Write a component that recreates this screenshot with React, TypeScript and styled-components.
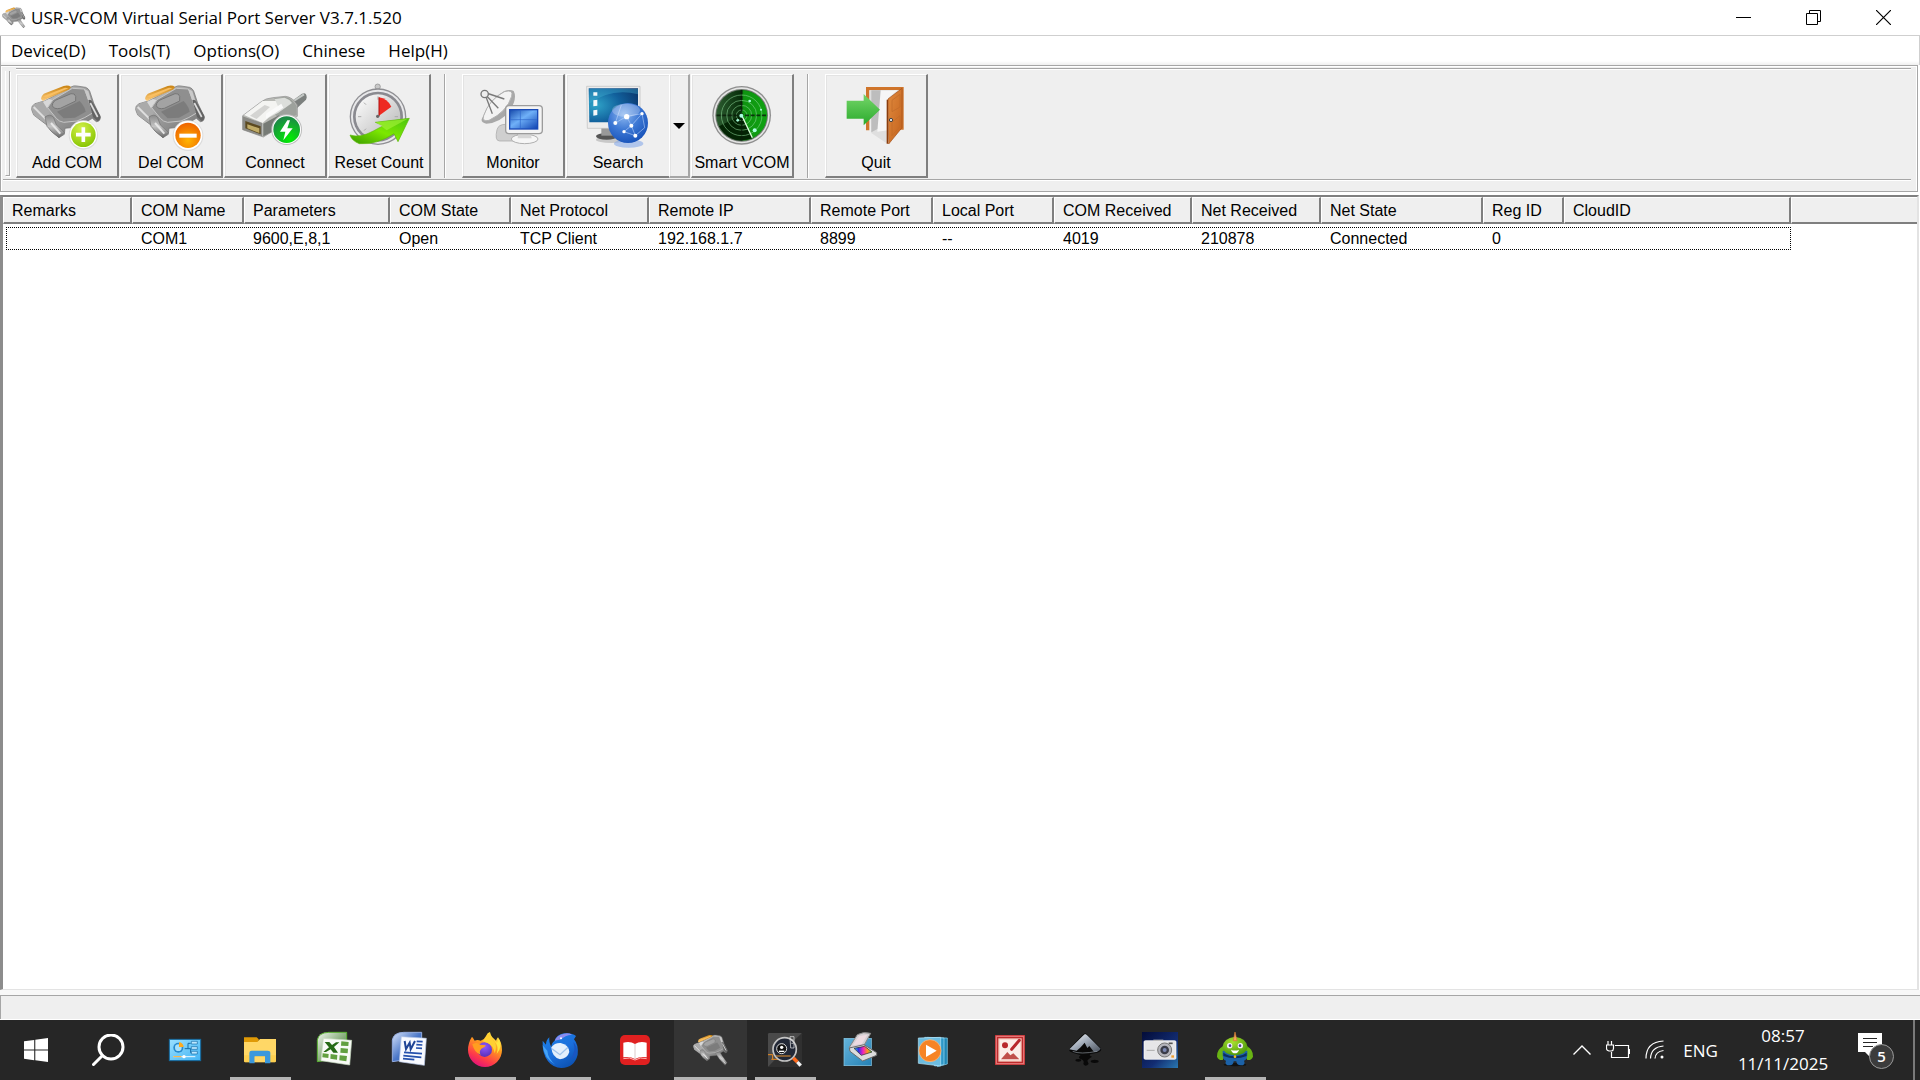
import React from "react";
import styled, { createGlobalStyle, css } from "styled-components";

const face = "#efefef";
const shade = "#a6a6a6";
const dark = "#7f7f7f";
const shellFont = '"Open Sans", "Noto Sans", sans-serif';
const classicFont = '"Liberation Sans", Arial, sans-serif';

const GlobalStyle = createGlobalStyle`
  *, *::before, *::after { box-sizing: border-box; }
  body { margin: 0; background: #fff; color: #000; }
  button { font: inherit; color: inherit; background: none; border: 0; padding: 0; margin: 0; }
  svg { display: block; flex: none; }
`;

const Screen = styled.div`
  display: flex;
  flex-direction: column;
  min-height: 100vh;
  font-family: ${classicFont};
  font-size: 16px;
`;

const Window = styled.main`
  flex: 1;
  display: flex;
  flex-direction: column;
`;

const TitleBar = styled.header`
  display: flex;
  align-items: center;
  height: 36px;
  padding: 0 2px;
  border-bottom: 1px solid #cfcfcf;
  font-family: ${shellFont};
`;

const Title = styled.h1`
  flex: 1;
  margin: 0 0 0 5px;
  font-size: 17px;
  line-height: 24px;
  font-weight: 400;
`;

const CaptionButton = styled.button`
  display: grid;
  place-items: center;
  width: 70px;
  height: 34px;
`;

const MenuBar = styled.nav`
  display: flex;
  gap: 3px;
  height: 29px;
  border-left: 1px solid ${shade};
  border-right: 1px solid #cfcfcf;
  background: linear-gradient(#fff 25px, ${face} 29px);
  font-family: ${shellFont};
  font-size: 17px;
`;

const MenuItem = styled.button`
  padding: 0 10px;
  line-height: 27px;
`;

const Rebar = styled.section`
  height: 127px;
  margin-right: 2px;
  border: 1px solid ${shade};
  background: ${face};
  box-shadow: inset 1px 1px #fff, inset -1px 0 #fff;
  padding: 2px 6px 0 2px;
`;

const Band = styled.div`
  display: flex;
  align-items: flex-start;
  height: 112px;
  border-bottom: 1px solid ${shade};
  box-shadow: 0 1px #fff;
`;

const Grip = styled.div`
  width: 5px;
  height: 105px;
  margin: 3px 6px 0 2px;
  border: solid ${shade};
  border-width: 0 1px 1px 0;
  border-left: 1px solid #fff;
  box-shadow: 1px 1px #fff;
`;

const Tools = styled.div`
  flex: 1;
  display: flex;
  gap: 1px;
  padding-top: 5px;
  border-top: 1px solid ${shade};
  box-shadow: inset 0 1px #fff;
`;

const raised = css`
  border: solid;
  border-width: 1px 2px 2px 1px;
  border-color: #fff ${dark} ${dark} #fff;
  box-shadow: inset 1px 1px #e3e3e3;
`;

const ToolButton = styled.button<{ $flat?: boolean }>`
  ${raised}
  display: flex;
  flex-direction: column;
  align-items: center;
  width: 103px;
  height: 104px;
  padding-top: 6px;
  line-height: 20px;
  white-space: nowrap;
  ${(p) => p.$flat && "border-right-width: 0;"}
`;

const DropButton = styled.button`
  ${raised}
  display: grid;
  place-items: center;
  width: 21px;
  height: 104px;
  margin-left: -1px;
  border-color: #fff ${shade} ${shade} #fff;
`;

const Separator = styled.div`
  width: 2px;
  height: 104px;
  margin: 0 15px 0 12px;
  border-left: 1px solid ${shade};
  border-right: 1px solid #fff;
`;

const ListFrame = styled.section`
  flex: 1;
  margin: 3px 1px 0 0;
  border: solid;
  border-width: 2px 2px 1px 3px;
  border-color: ${dark} #e3e3e3 #e3e3e3 #8c8c8c;
  background: #fff;
`;

const Table = styled.table`
  width: 100%;
  table-layout: fixed;
  border-collapse: separate;
  border-spacing: 0;
`;

const HeadCell = styled.th`
  height: 27px;
  padding: 1px 0 0 8px;
  border: solid;
  border-width: 1px 2px 2px 1px;
  border-color: #fff ${dark} ${dark} #fff;
  background: ${face};
  font-weight: 400;
  line-height: 22px;
  text-align: left;
  white-space: nowrap;
  &:last-child { border-right-width: 0; }
`;

const Row = styled.tr`
  position: relative;
`;

const FocusRing = styled.span<{ $width: number }>`
  position: absolute;
  left: 3px;
  top: 3px;
  width: ${(p) => p.$width}px;
  height: 23px;
  border: 1px dotted #000;
  pointer-events: none;
`;

const Cell = styled.td`
  height: 29px;
  padding: 0 0 0 9px;
  line-height: 24px;
  white-space: nowrap;
`;

const StatusBar = styled.footer`
  height: 30px;
  border-top: 5px solid #f8f8f8;
  border-bottom: 1px solid #fff;
  background: ${face};
  box-shadow: inset 0 1px ${shade}, inset 1px 0 ${shade};
`;

const Taskbar = styled.nav`
  display: flex;
  height: 60px;
  background: #262626;
  color: #fff;
  font-family: ${shellFont};
  font-size: 17px;
`;

const ShellButton = styled.button`
  display: grid;
  place-items: center;
  width: 72px;
  height: 60px;
`;

const Apps = styled.div`
  flex: 1;
  display: flex;
  padding-left: 4px;
`;

const AppButton = styled.button<{ $running?: boolean; $active?: boolean }>`
  display: flex;
  justify-content: center;
  width: ${(p) => (p.$active ? 73 : 61)}px;
  height: 60px;
  margin: 0 ${(p) => (p.$active ? 1 : 7)}px;
  padding-top: 10px;
  border-bottom: 3px solid ${(p) => (p.$running || p.$active ? "#b4b4b4" : "transparent")};
  background: ${(p) => (p.$active ? "#343434" : "transparent")};
`;

const Tray = styled.div`
  display: flex;
  align-items: center;
  border-right: 2px solid #7a7a7a;
  margin-right: 5px;
`;

const TrayButton = styled.button<{ $width: number }>`
  display: grid;
  place-items: center;
  width: ${(p) => p.$width}px;
  height: 60px;
`;

const Clock = styled.button`
  width: 112px;
  line-height: 28px;
  text-align: center;
`;

const ClockLine = styled.time`
  display: block;
`;

/* ---------- drawings ---------- */

const Defs = () => (
  <svg width="0" height="0" style={{ position: "absolute" }} aria-hidden="true">
    <defs>
      <linearGradient id="metal" x1="0" y1="0" x2="1" y2="1">
        <stop offset="0" stopColor="#d2d2d2" /><stop offset=".5" stopColor="#9a9a9a" /><stop offset="1" stopColor="#6c6c6c" />
      </linearGradient>
      <linearGradient id="metal2" x1="0" y1="0" x2="0" y2="1">
        <stop offset="0" stopColor="#8a8a8a" /><stop offset=".5" stopColor="#c4c4c4" /><stop offset="1" stopColor="#6a6a6a" />
      </linearGradient>
      <linearGradient id="gold" x1="0" y1="0" x2="0" y2="1">
        <stop offset="0" stopColor="#c98312" /><stop offset="1" stopColor="#fbc978" />
      </linearGradient>
      <radialGradient id="lime" cx=".4" cy=".25" r=".8"><stop offset="0" stopColor="#d2f04a" /><stop offset="1" stopColor="#86c400" /></radialGradient>
      <radialGradient id="orange" cx=".5" cy=".7" r=".7"><stop offset="0" stopColor="#ffb400" /><stop offset="1" stopColor="#ee6200" /></radialGradient>
      <radialGradient id="bolt" cx=".6" cy=".85" r=".8"><stop offset="0" stopColor="#00f000" /><stop offset="1" stopColor="#1c8a45" /></radialGradient>
      <linearGradient id="white" x1="0" y1="0" x2="1" y2="1"><stop offset="0" stopColor="#fff" /><stop offset="1" stopColor="#b4b4b4" /></linearGradient>
      <linearGradient id="arrow" x1="0" y1="1" x2="1" y2="0"><stop offset="0" stopColor="#3a9a00" /><stop offset=".5" stopColor="#7ce800" /><stop offset="1" stopColor="#4cc412" /></linearGradient>
      <linearGradient id="screen" x1="0" y1="0" x2="1" y2="1"><stop offset="0" stopColor="#1b4fae" /><stop offset=".45" stopColor="#6fb0f8" /><stop offset="1" stopColor="#1246b4" /></linearGradient>
      <radialGradient id="desk" cx=".15" cy=".5" r="1"><stop offset="0" stopColor="#2fa3c8" /><stop offset=".5" stopColor="#11609c" /><stop offset="1" stopColor="#0b3166" /></radialGradient>
      <radialGradient id="globe" cx=".4" cy=".3" r=".75"><stop offset="0" stopColor="#8db8f0" /><stop offset=".5" stopColor="#3d78d4" /><stop offset="1" stopColor="#1550b8" /></radialGradient>
      <linearGradient id="radar" x1="0" y1="0" x2="1" y2="0"><stop offset="0" stopColor="#2c5c30" /><stop offset=".5" stopColor="#062c08" /><stop offset=".55" stopColor="#067a0a" /><stop offset="1" stopColor="#0aa80e" /></linearGradient>
      <linearGradient id="door" x1="0" y1="0" x2="1" y2="1"><stop offset="0" stopColor="#e08a3e" /><stop offset="1" stopColor="#c4621c" /></linearGradient>
      <linearGradient id="exit" x1="0" y1="0" x2="0" y2="1"><stop offset="0" stopColor="#76d66a" /><stop offset="1" stopColor="#2aaa2c" /></linearGradient>
      <linearGradient id="sky" x1="0" y1="0" x2="1" y2="1"><stop offset="0" stopColor="#9be0ff" /><stop offset="1" stopColor="#42b4f4" /></linearGradient>
      <linearGradient id="fire" x1=".8" y1="0" x2=".3" y2="1"><stop offset="0" stopColor="#fff14a" /><stop offset=".4" stopColor="#ff9a1e" /><stop offset=".75" stopColor="#ff3c48" /><stop offset="1" stopColor="#e0107c" /></linearGradient>
      <radialGradient id="violet" cx=".5" cy=".3" r=".7"><stop offset="0" stopColor="#9059ff" /><stop offset="1" stopColor="#5a30b8" /></radialGradient>
      <linearGradient id="bird" x1=".2" y1="0" x2=".8" y2="1"><stop offset="0" stopColor="#1d7fe4" /><stop offset=".5" stopColor="#1a6fdc" /><stop offset="1" stopColor="#0b4fae" /></linearGradient>
      <linearGradient id="rainbow" x1="0" y1="0" x2="1" y2="0"><stop offset="0" stopColor="#30d0f0" /><stop offset=".25" stopColor="#3030e0" /><stop offset=".5" stopColor="#f020c0" /><stop offset=".75" stopColor="#ff9020" /><stop offset="1" stopColor="#50e040" /></linearGradient>
      <linearGradient id="scan" x1="0" y1="0" x2="1" y2="1"><stop offset="0" stopColor="#64b4dc" /><stop offset="1" stopColor="#2580b4" /></linearGradient>
      <linearGradient id="peak" x1="0" y1="0" x2="1" y2="1"><stop offset="0" stopColor="#fff" /><stop offset=".45" stopColor="#a4aebc" /><stop offset="1" stopColor="#4a525e" /></linearGradient>
      <radialGradient id="monster" cx=".4" cy=".3" r=".7"><stop offset="0" stopColor="#a8e030" /><stop offset="1" stopColor="#4e9a0c" /></radialGradient>
      <linearGradient id="navy" x1="0" y1="0" x2="1" y2="1"><stop offset="0" stopColor="#030c38" /><stop offset=".6" stopColor="#122c72" /><stop offset="1" stopColor="#2a78b0" /></linearGradient>
      <linearGradient id="wordblue" x1="0" y1="0" x2="1" y2="1"><stop offset="0" stopColor="#d8e4fa" /><stop offset=".5" stopColor="#4c78c8" /><stop offset="1" stopColor="#1c48a0" /></linearGradient>
      <linearGradient id="xlgreen" x1="0" y1="0" x2="1" y2="1"><stop offset="0" stopColor="#f0f6ee" /><stop offset=".5" stopColor="#8cb080" /><stop offset="1" stopColor="#2c6c20" /></linearGradient>
    </defs>
  </svg>
);

const Art = ({ box, size, children }: { box: string; size: number; children: React.ReactNode }) => (
  <svg width={size} height={size} viewBox={box} aria-hidden="true">{children}</svg>
);

/* Serial plug on a 216-unit square */
const Plug = () => (
  <g>
    <path d="M2 86 Q0 74 12 68 L40 60 L120 18 Q128 13 138 15 L164 19 Q172 22 176 30 L188 66 L208 108 Q208 122 196 122 L184 112 L140 138 L102 142 L100 160 L84 170 L60 150 L50 134 L8 102 Z" fill="url(#metal)" stroke="#707070" strokeWidth="2" />
    <path d="M30 54 Q32 40 44 36 L98 15 Q112 11 120 18 L114 26 L52 52 L36 60 Z" fill="url(#gold)" />
    <path d="M36 46 L102 20 L112 22 L46 50Z" fill="#f9bf62" />
    <path d="M4 86 Q2 74 14 69 L34 60 L50 84 L58 104 L54 134 L8 102 Z" fill="#aaaaaa" />
    <path d="M8 78 L52 122" stroke="#dedede" strokeWidth="6" />
    <path d="M36 62 L54 54 L66 58 L48 82Z" fill="#d8d8d8" />
    <path d="M50 80 L66 56 L124 22 L160 24 L188 94 Q160 112 138 120 L98 124 Q84 122 76 112 Z" fill="#8f8f8f" stroke="#c6c6c6" strokeWidth="3" />
    <path d="M160 24 L172 30 L190 88 L184 98 Z" fill="#c9c9c9" />
    <path d="M64 74 Q64 60 82 54 L120 38 Q132 36 134 46 L134 60 L88 82 Q68 86 64 74Z" fill="#a3a3a3" stroke="#777" strokeWidth="3" />
    <path d="M78 92 L146 60 Q162 78 164 92 L132 110 L98 112 Z" fill="#7c7c7c" />
    <path d="M42 108 Q58 96 68 110 L76 132 L100 154 L84 170 L62 152 L48 136Z" fill="url(#metal2)" stroke="#6f6f6f" strokeWidth="2" />
    <path d="M60 126 L88 158" stroke="#e6e6e6" strokeWidth="6" />
    <path d="M172 58 Q180 52 186 66 L208 104 Q210 116 200 120 L186 108 Z" fill="#636363" />
    <path d="M178 66 L200 108" stroke="#dcdcdc" strokeWidth="5" />
  </g>
);

const PlugWithCable = () => (
  <g>
    <Plug />
    <path d="M136 124 L162 116 L176 140 L206 182 L194 198 L160 160 Z" fill="url(#metal2)" stroke="#666" strokeWidth="2" />
    <path d="M160 140 L196 188" stroke="#d0d0d0" strokeWidth="6" />
  </g>
);

const AddIcon = () => (
  <Art box="0 0 216 216" size={72}>
    <Plug />
    <circle cx="157" cy="162" r="44" fill="#dcdcdc" /><circle cx="157" cy="161" r="41" fill="#fff" />
    <circle cx="157" cy="161" r="37" fill="url(#lime)" />
    <path d="M157 139v44M135 161h44" stroke="#fff" strokeWidth="11" />
  </Art>
);
const DelIcon = () => (
  <Art box="0 0 216 216" size={72}>
    <Plug />
    <circle cx="159" cy="164" r="46" fill="#dcdcdc" /><circle cx="159" cy="163" r="43" fill="#fff" />
    <circle cx="159" cy="163" r="38" fill="url(#orange)" />
    <path d="M133 164h52" stroke="#fff" strokeWidth="12" />
  </Art>
);
const ConnectIcon = () => (
  <Art box="719 240 216 216" size={72}>
    <path d="M858 314 L908 278 Q922 272 922 290 L920 296 L880 334Z" fill="#7c807e" />
    <path d="M864 312 L914 280" stroke="#c4c8c6" strokeWidth="6" />
    <path d="M730 344 L786 302 Q798 292 820 290 L858 286 Q880 288 894 312 L894 346 L792 408 L730 386Z" fill="#b9bab6" stroke="#8c8c8c" strokeWidth="2" />
    <path d="M734 342 L790 300 L840 300 L846 316 L790 366Z" fill="#f4f4f2" />
    <path d="M752 344 L796 312 L812 318 L772 354Z" fill="#d4d4d2" />
    <path d="M824 292 L858 288 Q880 292 892 316 L892 342 L846 358 L826 340 L846 310Z" fill="#9da19c" />
    <path d="M826 294 L856 290 Q870 294 878 306 L836 336 L800 354 L836 316Z" fill="#dcdedb" />
    <path d="M800 338 L846 308 L852 320 L800 354Z" fill="#fafafa" />
    <path d="M730 346 L788 366 L788 406 L730 386Z" fill="#8b8b87" />
    <path d="M738 360 L784 376 V400 L738 382Z" fill="#5c4a20" />
    <path d="M744 370 L780 382 V396 L744 382Z" fill="#c0ab66" />
    <path d="M792 368 L840 342 L830 386 L792 406Z" fill="#777b76" />
    <circle cx="862" cy="386" r="46" fill="#bdbdbd" /><circle cx="862" cy="386" r="43" fill="#fff" />
    <circle cx="862" cy="386" r="40" fill="url(#bolt)" />
    <path d="M864 358 L842 392 H858 L852 418 L880 382 H864 L872 358Z" fill="#fff" />
  </Art>
);
const ResetIcon = () => (
  <Art box="1029 240 216 216" size={72}>
    <circle cx="1133" cy="257" r="8" fill="#c8c8c8" stroke="#888" strokeWidth="2" />
    <circle cx="1134" cy="347" r="85" fill="#8e8e92" />
    <circle cx="1134" cy="347" r="81" fill="#e8e8ea" />
    <circle cx="1134" cy="347" r="75" fill="#8a8a90" />
    <circle cx="1134" cy="347" r="67" fill="url(#white)" />
    <path d="M1134 286v10M1074 347h10M1184 347h10M1092 305l6 6M1092 389l6-6" stroke="#aaa" strokeWidth="3" />
    <path d="M1137 289 Q1162 293 1174 317 L1137 344Z" fill="#ee2a22" />
    <path d="M1137 289v56" stroke="#b01010" strokeWidth="3" />
    <circle cx="1133" cy="346" r="5" fill="#666" />
    <path d="M1050 402 Q1080 412 1120 390 L1150 374 L1126 364 L1228 352 L1194 422 L1182 398 Q1130 432 1078 428 Q1056 420 1050 402Z" fill="url(#arrow)" stroke="#5cb808" strokeWidth="2" />
    <path d="M1128 364 L1222 354 L1160 388Z" fill="#a6f43c" opacity=".6" />
  </Art>
);
const MonitorIcon = () => (
  <Art box="140 60 216 216" size={72}>
    <path d="M200 206 Q204 190 226 190 L262 210 V240 H208 Q192 240 200 206Z" fill="#cfcfcf" stroke="#a4a4a4" strokeWidth="2" />
    <path d="M156 170 Q148 184 168 188 Q210 186 238 150 Q262 112 250 90 Q240 84 222 90 Q180 112 156 170Z" fill="#a8a8a8" />
    <path d="M160 164 Q176 116 222 92 Q250 84 244 106 Q230 152 176 178 Q154 184 160 164Z" fill="#f3f3f3" stroke="#b2b2b2" strokeWidth="3" />
    <path d="M164 100 L204 142 M164 100 L186 158 M168 96 L222 114" stroke="#7a7a7a" strokeWidth="4" />
    <circle cx="163" cy="99" r="11" fill="#eee" stroke="#777" strokeWidth="4" />
    <ellipse cx="283" cy="234" rx="40" ry="14" fill="#f6f6f6" stroke="#b0b0b0" strokeWidth="3" />
    <path d="M264 216h36l4 16h-42z" fill="#d6d6d6" />
    <rect x="226" y="134" width="110" height="84" rx="10" fill="#f4f4f4" stroke="#9c9c9c" strokeWidth="4" />
    <rect x="236" y="144" width="88" height="62" fill="#1a4bb8" />
    <rect x="240" y="148" width="80" height="54" fill="url(#screen)" />
    <path d="M240 176h80M270 148v54" stroke="#2d66cc" strokeWidth="2" />
  </Art>
);
const SearchToolIcon = () => (
  <Art box="452 60 216 216" size={72}>
    <ellipse cx="540" cy="236" rx="46" ry="10" fill="#c8c8c8" />
    <ellipse cx="526" cy="226" rx="32" ry="10" fill="#555" /><path d="M510 200h34v24h-34z" fill="#999" />
    <path d="M466 76 H626 V202 H468Z" fill="#ececec" stroke="#bdbdbd" strokeWidth="2" />
    <path d="M472 82 H620 V184 H474Z" fill="url(#desk)" />
    <path d="M474 128 Q540 80 620 100 V84 H474Z" fill="#49b8d8" opacity=".35" />
    <path d="M486 94h12v10h-12zM486 118l12-2v18l-12 2zM486 148l12-2v16l-12 2z" fill="#f4f8fa" />
    <ellipse cx="592" cy="248" rx="44" ry="12" fill="#86a8e8" opacity=".6" />
    <circle cx="590" cy="186" r="60" fill="url(#globe)" />
    <path d="M552 186 L586 166 L632 158 M586 166 L600 194 L632 158 M600 194 L578 212 L612 224 L600 194 M552 186 L570 132 M632 158 L640 200 L612 224" stroke="#c4dcff" strokeWidth="2" opacity=".8" fill="none" />
    <g fill="#fff"><circle cx="552" cy="186" r="6" /><circle cx="586" cy="167" r="8" /><circle cx="600" cy="194" r="6" /><circle cx="632" cy="158" r="5" /><circle cx="578" cy="212" r="5" /><circle cx="612" cy="224" r="6" /></g>
    <ellipse cx="584" cy="148" rx="42" ry="20" fill="#fff" opacity=".25" />
  </Art>
);
const RadarIcon = () => (
  <Art box="827 60 216 216" size={72}>
    <circle cx="934" cy="163" r="88" fill="#8e8e8e" /><circle cx="934" cy="163" r="84" fill="#e4e4e4" />
    <circle cx="934" cy="163" r="79" fill="#707870" /><circle cx="934" cy="163" r="76" fill="url(#radar)" />
    <path d="M934 163 L966 232 Q900 254 866 196Z" fill="#032404" />
    <path d="M934 163 L936 88 Q1006 96 1009 163 Q1006 210 967 231Z" fill="#12a014" opacity=".7" />
    <g fill="none" stroke="#8fd89a" strokeWidth="2.5" opacity=".65"><circle cx="934" cy="163" r="16" /><circle cx="934" cy="163" r="30" /><circle cx="934" cy="163" r="45" /><circle cx="934" cy="163" r="61" /></g>
    <path d="M934 88v150M859 163h150" stroke="#0a1c0a" strokeWidth="5" strokeDasharray="12 5" opacity=".8" />
    <path d="M934 163 L966 230" stroke="#e0ffe0" strokeWidth="4" />
    <g fill="#a8ffe0"><circle cx="933" cy="164" r="6" /><circle cx="973" cy="208" r="6" /><circle cx="958" cy="120" r="4" /><circle cx="992" cy="146" r="3" /><circle cx="922" cy="178" r="4" /></g>
  </Art>
);
const QuitIcon = () => (
  <Art box="1228 60 216 216" size={72}>
    <path d="M1306 78 H1419 V206 H1406 V88 H1316 V208 H1306Z" fill="#cf742a" />
    <path d="M1316 88 H1406 V112 L1370 248 L1322 216Z" fill="#dfdfdf" />
    <path d="M1338 88 H1392 Q1346 130 1356 196 L1322 214 V88Z" fill="#bdbdbd" />
    <path d="M1350 88 H1400 L1372 112 V208 L1340 212Z" fill="#f6f6f6" />
    <path d="M1372 114 L1414 82 V200 L1374 249Z" fill="url(#door)" stroke="#a4501a" strokeWidth="2" />
    <path d="M1384 118 L1408 100 V138 L1384 152ZM1384 184 L1408 164 V196 L1384 224Z" fill="none" stroke="#c06a28" strokeWidth="2" />
    <path d="M1370 116v132" stroke="#8a3d0c" strokeWidth="4" />
    <circle cx="1381" cy="177" r="5" fill="#ddd" stroke="#444" strokeWidth="3" />
    <path d="M1248 119 H1299 V99 L1348 146 L1299 193 V173 H1248Z" fill="url(#exit)" />
  </Art>
);

const VcomTaskIcon = () => <Art box="-12 -16 236 236" size={39}><PlugWithCable /></Art>;
const PanelIcon = () => (
  <Art box="498 180 117 117" size={39}>
    <rect x="508" y="208" width="94" height="64" fill="url(#sky)" stroke="#14689c" strokeWidth="3" />
    <circle cx="535" cy="233" r="15" fill="#2789cc" /><circle cx="535" cy="233" r="10" fill="#a4e0fc" /><path d="M537 231V217A14 14 0 0 1 551 231Z" fill="#ffaa1c" />
    <path d="M554 236h10v-16h8M564 236h8v12h8" fill="none" stroke="#156ca8" strokeWidth="3" />
    <path d="M574 214h18v8h-18zM574 230h18v8h-18zM574 244h18v8h-18z" fill="#bce8ff" stroke="#156ca8" strokeWidth="2" />
    <path d="M520 260h66" stroke="#e8f8ff" strokeWidth="3" /><circle cx="552" cy="260" r="5" fill="#fff" />
    <path d="M520 260h24" stroke="#ffae32" strokeWidth="3" />
  </Art>
);
const FolderIcon = () => (
  <Art box="723 180 117 117" size={39}>
    <path d="M732 202h38l6 6v12h-44z" fill="#e09a06" />
    <path d="M732 216h40l8-9h48v66q0 4-4 4h-88q-4 0-4-4z" fill="#ffd766" />
    <path d="M732 256h96v17q0 4-4 4h-88q-4 0-4-4z" fill="#fcc83a" opacity=".5" />
    <path d="M748 280v-31q0-7 7-7h48q8 0 8 7v31h-16v-21h-31v21z" fill="#3b98dc" />
    <rect x="764" y="260" width="31" height="16" fill="#ffd766" />
  </Art>
);
const ExcelIcon = () => (
  <Art box="948 180 117 117" size={39}>
    <path d="M952 275 V210 Q956 188 986 187 H1040 V262Z" fill="url(#xlgreen)" stroke="#58b030" strokeWidth="3" />
    <path d="M970 205 L1055 211 L1049 285 L963 272Z" fill="#f8fbf6" stroke="#c4d8bc" strokeWidth="2" />
    <path d="M1024 214l22 2-1 12-22-1zM1022 234l22 2-1 14-22-2zM1019 256l22 2-2 16-21-3zM968 250l18 2-1 12-18-2zM992 252l20 3-1 14-20-3z" fill="#62a040" />
    <path d="M974 216h14l8 9 12-8h10l-16 14 12 17h-14l-8-10-14 8h-8l17-14z" fill="#256a14" />
  </Art>
);
const WordIcon = () => (
  <Art box="1173 180 117 117" size={39}>
    <path d="M1177 275 V210 Q1181 188 1211 187 H1265 V262Z" fill="url(#wordblue)" stroke="#94acdf" strokeWidth="3" />
    <path d="M1204 200 L1279 205 L1273 286 L1198 275Z" fill="#f8faff" stroke="#b8c8e8" strokeWidth="2" />
    <path d="M1214 213 L1218 237 L1229 218 L1232 238 L1245 213" fill="none" stroke="#1f4496" strokeWidth="6" />
    <path d="M1250 214l18 1M1249 224l18 1M1248 234l18 1M1212 247l54 4M1210 257l54 5M1209 266l34 3" stroke="#2450ac" strokeWidth="5" />
  </Art>
);
const FirefoxIcon = () => (
  <Art box="78 60 117 117" size={39}>
    <path d="M96 80 Q100 84 104 92 Q112 88 122 92 Q134 88 138 78 Q142 68 150 66 Q152 80 162 86 L168 92 Q170 86 174 82 Q186 98 186 120 A51 51 0 0 1 84 120 Q84 98 96 80Z" fill="url(#fire)" />
    <circle cx="134" cy="119" r="22" fill="url(#violet)" />
    <path d="M97 103 Q112 94 120 104 L137 106 Q136 112 124 116 Q116 124 122 134 Q104 130 97 103Z" fill="#ff9e20" />
    <path d="M150 68 Q152 82 164 94 Q178 110 170 132 Q190 108 176 86 L171 98 Q156 86 150 68Z" fill="#ffe63e" />
    <path d="M128 94 Q140 76 150 68 Q150 84 164 96 Q172 112 164 130 Q160 106 144 100Z" fill="#ffd032" />
  </Art>
);
const BirdIcon = () => (
  <Art box="303 60 117 117" size={39}>
    <path d="M308 92 Q306 130 324 154 Q340 174 364 174 Q404 172 413 134 Q416 104 402 88 L408 78 Q396 68 372 70 Q350 74 344 92 Q334 98 334 112 Q326 94 328 82 Q318 90 318 104Z" fill="url(#bird)" />
    <path d="M344 92 Q350 76 372 71 Q386 68 396 74 Q374 76 364 88Z" fill="#8a8cf0" />
    <path d="M308 106 Q312 146 346 164 Q324 146 322 122Z" fill="#45a4f6" />
    <path d="M400 96 Q410 126 390 148 Q404 144 410 130 Q412 108 400 96Z" fill="#1a56c0" />
    <path d="M334 112 Q344 98 362 99 Q386 104 388 126 Q382 146 360 148 Q336 142 334 112Z" fill="#e4f0fc" />
    <path d="M336 116 L360 134 L384 112" fill="none" stroke="#a0c4ec" strokeWidth="4" />
    <circle cx="363" cy="85" r="3" fill="#fff" />
  </Art>
);
const BookIcon = () => (
  <Art box="528 60 117 117" size={39}>
    <rect x="540" y="75" width="90" height="90" rx="15" fill="#e02020" />
    <path d="M550 98 Q570 92 585 102 Q600 92 620 98 V142 Q600 138 585 147 Q570 138 550 142Z" fill="#fff" />
    <path d="M585 102v45" stroke="#c8b0b0" strokeWidth="2" />
    <path d="M550 146 Q570 140 585 150 Q600 140 620 146" fill="none" stroke="#ffb4b4" strokeWidth="3" />
  </Art>
);
const LensIcon = () => (
  <Art box="978 60 117 117" size={39}>
    <rect x="984" y="69" width="102" height="102" rx="4" fill="#4a4a4a" />
    <path d="M984 171 L1034 118 L1086 69 V171Z" fill="#303030" />
    <path d="M984 134h14v14M994 148h34" stroke="#e88a20" strokeWidth="3" fill="none" />
    <circle cx="1034" cy="118" r="35" fill="#222836" stroke="#c4c4c4" strokeWidth="5" />
    <path d="M1008 138h44" stroke="#b87a30" strokeWidth="4" />
    <circle cx="1025" cy="116" r="15" fill="#111" stroke="#ddd" strokeWidth="3" /><circle cx="1025" cy="112" r="5" fill="#fff" /><path d="M1017 124h16" stroke="#fff" strokeWidth="4" />
    <path d="M1050 80h12v34h-10zM1054 90h6M1054 100h6" stroke="#eee" strokeWidth="2" fill="none" />
    <path d="M1060 144 L1072 156" stroke="#ff6a1c" strokeWidth="11" /><path d="M1072 156 L1082 167" stroke="#f4f4f4" strokeWidth="10" />
  </Art>
);
const ScannerIcon = () => (
  <Art box="63 60 117 117" size={39}>
    <rect x="72" y="85" width="82" height="82" fill="url(#scan)" stroke="#8accea" strokeWidth="2" />
    <path d="M88 112 L112 74 Q130 64 152 70 L132 106 L98 116Z" fill="#d6d0d4" stroke="#888" strokeWidth="3" />
    <path d="M98 106 L118 78 L142 74 L126 102Z" fill="#eedbe2" />
    <path d="M88 114 L132 104 L170 128 V136 L128 153 L90 124Z" fill="#dcdcdc" stroke="#6c6c6c" strokeWidth="3" />
    <path d="M102 115 L134 109 L156 126 L124 136Z" fill="url(#rainbow)" stroke="#222" strokeWidth="2" />
  </Art>
);
const MediaIcon = () => (
  <Art box="288 60 117 117" size={39}>
    <path d="M322 82 L382 84 V162 L352 170Z" fill="#1f86b4" stroke="#8cd4f0" strokeWidth="2" />
    <path d="M314 82 L372 84 V164 L344 168Z" fill="#2e98c8" stroke="#a4dcf4" strokeWidth="2" />
    <path d="M295 84 L362 82 V168 L295 160Z" fill="#6cbce0" stroke="#b8e6f8" strokeWidth="2" />
    <circle cx="330" cy="122" r="33" fill="#f68426" stroke="#ffc088" strokeWidth="2" />
    <path d="M318 104 L350 122 L318 141Z" fill="#fff" />
  </Art>
);
const PictureIcon = () => (
  <Art box="513 60 117 117" size={39}>
    <rect x="525" y="75" width="90" height="90" fill="#bc2a2c" /><rect x="529" y="79" width="82" height="82" fill="none" stroke="#e47474" strokeWidth="4" />
    <rect x="537" y="87" width="66" height="66" fill="#fbeee8" stroke="#f4c8bc" strokeWidth="4" />
    <circle cx="555" cy="106" r="9" fill="#b8282c" /><path d="M575 118 L598 91" stroke="#b8282c" strokeWidth="9" strokeLinecap="round" />
    <path d="M543 148 L562 126 L571 136 L580 130 L598 148Z" fill="#c0504a" />
  </Art>
);
const InkIcon = () => (
  <Art box="738 60 117 117" size={39}>
    <path d="M795 70 Q800 70 806 78 L842 114 Q848 124 832 128 L812 132 Q804 136 816 140 Q806 146 802 152 L806 162 Q796 172 790 162 Q794 152 784 148 Q770 144 782 136 L758 128 Q742 124 750 114 L786 76Z" fill="#090909" />
    <path d="M795 72 Q799 72 806 80 L842 116 Q836 126 822 126 L808 108 L802 114 L794 98 L782 112 L770 122 L748 118 L788 78Z" fill="url(#peak)" />
    <ellipse cx="775" cy="151" rx="9" ry="4" fill="#090909" /><ellipse cx="824" cy="154" rx="12" ry="5" fill="#090909" />
    <path d="M758 124 Q780 134 832 124" stroke="#8c949c" strokeWidth="2" fill="none" />
  </Art>
);
const CameraIcon = () => (
  <Art box="963 60 117 117" size={39}>
    <rect x="966" y="66" width="108" height="108" fill="url(#navy)" />
    <rect x="972" y="92" width="96" height="56" rx="4" fill="#e6e6e8" stroke="#fff" strokeWidth="2" />
    <path d="M1000 91h30" stroke="#bbb" strokeWidth="4" /><path d="M980 121h24" stroke="#aaa" strokeWidth="3" />
    <circle cx="1034" cy="120" r="21" fill="#b4b4ba" stroke="#777" strokeWidth="3" /><circle cx="1034" cy="120" r="13" fill="#3a3c48" /><circle cx="1034" cy="120" r="6" fill="#7a86b0" />
    <path d="M1046 100h12" stroke="#555" strokeWidth="5" /><rect x="1054" y="136" width="8" height="7" fill="#f0a030" />
  </Art>
);
const MonsterIcon = () => (
  <Art box="1188 60 117 117" size={39}>
    <ellipse cx="1245" cy="164" rx="34" ry="5" fill="#111" />
    <path d="M1210 108 Q1190 118 1191 140 Q1196 152 1208 150 L1218 132ZM1280 108 Q1300 118 1299 140 Q1294 152 1282 150 L1272 132Z" fill="#69b414" />
    <path d="M1208 122 Q1206 150 1218 152 Q1212 166 1230 166 Q1240 166 1241 154 H1249 Q1250 166 1262 166 Q1278 166 1272 152 Q1284 148 1282 122Z" fill="#1c62a8" />
    <path d="M1210 128 Q1230 142 1245 137 Q1262 142 1280 128 V138 Q1245 152 1210 138Z" fill="#0c2e60" />
    <path d="M1207 112 Q1210 84 1245 80 Q1280 84 1283 112 Q1280 134 1245 136 Q1210 134 1207 112Z" fill="url(#monster)" />
    <path d="M1240 92 L1245 66 L1251 92Z" fill="#f4a45c" stroke="#d27830" strokeWidth="2" />
    <circle cx="1229" cy="107" r="8" fill="#f4f0ff" /><circle cx="1261" cy="107" r="8" fill="#f4f0ff" /><circle cx="1230" cy="107" r="4" fill="#4c3c90" /><circle cx="1260" cy="107" r="4" fill="#4c3c90" />
    <path d="M1233 119 Q1245 124 1257 119 Q1254 130 1245 130 Q1236 130 1233 119Z" fill="#fff" />
    <circle cx="1245" cy="140" r="4" fill="#f0c020" />
  </Art>
);

/* ---------- data ---------- */

const menus = ["Device(D)", "Tools(T)", "Options(O)", "Chinese", "Help(H)"];

const columns = [
  { name: "Remarks", width: 129, value: "" },
  { name: "COM Name", width: 112, value: "COM1" },
  { name: "Parameters", width: 146, value: "9600,E,8,1" },
  { name: "COM State", width: 121, value: "Open" },
  { name: "Net Protocol", width: 138, value: "TCP Client" },
  { name: "Remote IP", width: 162, value: "192.168.1.7" },
  { name: "Remote Port", width: 122, value: "8899" },
  { name: "Local Port", width: 121, value: "--" },
  { name: "COM Received", width: 138, value: "4019" },
  { name: "Net Received", width: 129, value: "210878" },
  { name: "Net State", width: 162, value: "Connected" },
  { name: "Reg ID", width: 81, value: "0" },
  { name: "CloudID", width: 227, value: "" },
];
const columnsWidth = columns.reduce((sum, c) => sum + c.width, 0);

const apps: { name: string; icon: React.ReactNode; running?: boolean; active?: boolean }[] = [
  { name: "Control Panel", icon: <PanelIcon /> },
  { name: "File Explorer", icon: <FolderIcon />, running: true },
  { name: "Excel", icon: <ExcelIcon /> },
  { name: "Word", icon: <WordIcon /> },
  { name: "Firefox", icon: <FirefoxIcon />, running: true },
  { name: "Thunderbird", icon: <BirdIcon />, running: true },
  { name: "Dictionary", icon: <BookIcon /> },
  { name: "USR-VCOM", icon: <VcomTaskIcon />, active: true },
  { name: "Image Viewer", icon: <LensIcon />, running: true },
  { name: "Scanner", icon: <ScannerIcon /> },
  { name: "Media Player", icon: <MediaIcon /> },
  { name: "Picture Manager", icon: <PictureIcon /> },
  { name: "Inkscape", icon: <InkIcon /> },
  { name: "Camera", icon: <CameraIcon /> },
  { name: "Monster", icon: <MonsterIcon />, running: true },
];

const Tool = ({ label, icon, flat }: { label: string; icon: React.ReactNode; flat?: boolean }) => (
  <ToolButton type="button" $flat={flat}>{icon}{label}</ToolButton>
);

export default function App() {
  return (
    <Screen>
      <GlobalStyle />
      <Defs />
      <Window>
        <TitleBar>
          <Art box="0 0 216 216" size={24}><PlugWithCable /></Art>
          <Title>USR-VCOM Virtual Serial Port Server V3.7.1.520</Title>
          <CaptionButton type="button" aria-label="Minimize">
            <svg width="15" height="15" viewBox="0 0 15 15"><path d="M0 7.5h15" stroke="#000" /></svg>
          </CaptionButton>
          <CaptionButton type="button" aria-label="Restore">
            <svg width="15" height="15" viewBox="0 0 15 15" fill="none" stroke="#000"><path d="M.5 3.5h11v11h-11zM3.5 3.5V.5h11v11h-3" /></svg>
          </CaptionButton>
          <CaptionButton type="button" aria-label="Close">
            <svg width="15" height="15" viewBox="0 0 15 15"><path d="M0 0l15 15M15 0L0 15" stroke="#000" strokeWidth="1.2" /></svg>
          </CaptionButton>
        </TitleBar>
        <MenuBar>
          {menus.map((m) => <MenuItem type="button" key={m}>{m}</MenuItem>)}
        </MenuBar>
        <Rebar>
          <Band>
            <Grip />
            <Tools>
              <Tool label="Add COM" icon={<AddIcon />} />
              <Tool label="Del COM" icon={<DelIcon />} />
              <Tool label="Connect" icon={<ConnectIcon />} />
              <Tool label="Reset Count" icon={<ResetIcon />} />
              <Separator />
              <Tool label="Monitor" icon={<MonitorIcon />} />
              <Tool label="Search" icon={<SearchToolIcon />} flat />
              <DropButton type="button" aria-label="Search options">
                <svg width="12" height="6" viewBox="0 0 12 6"><path d="M0 0h12L6 6z" /></svg>
              </DropButton>
              <Tool label="Smart VCOM" icon={<RadarIcon />} />
              <Separator />
              <Tool label="Quit" icon={<QuitIcon />} />
            </Tools>
          </Band>
        </Rebar>
        <ListFrame>
          <Table>
            <colgroup>
              {columns.map((c) => <col key={c.name} style={{ width: c.width }} />)}
              <col />
            </colgroup>
            <thead>
              <tr>
                {columns.map((c) => <HeadCell scope="col" key={c.name}>{c.name}</HeadCell>)}
                <HeadCell as="td" />
              </tr>
            </thead>
            <tbody>
              <Row>
                {columns.map((c) => <Cell key={c.name}>{c.value}</Cell>)}
                <Cell><FocusRing $width={columnsWidth - 3} /></Cell>
              </Row>
            </tbody>
          </Table>
        </ListFrame>
        <StatusBar />
      </Window>
      <Taskbar>
        <ShellButton type="button" aria-label="Start">
          <svg width="24" height="24" viewBox="0 0 24 24" fill="#fff"><path d="M0 3.3L10.2 1.9V11.5H0zM11.3 1.7L24 0V11.5H11.3zM0 12.5H10.2V22.2L0 20.8zM11.3 12.5H24V24L11.3 22.3z" /></svg>
        </ShellButton>
        <ShellButton type="button" aria-label="Search">
          <svg width="33" height="33" viewBox="1 1 33 33" fill="none" stroke="#fff" strokeWidth="3"><circle cx="20" cy="14" r="12" /><path d="M11.5 22.500L2.500 31.500" strokeLinecap="round" /></svg>
        </ShellButton>
        <Apps>
          {apps.map((a) => (
            <AppButton type="button" key={a.name} aria-label={a.name} $running={a.running} $active={a.active}>{a.icon}</AppButton>
          ))}
        </Apps>
        <Tray>
          <TrayButton type="button" aria-label="Show hidden icons" $width={36}>
            <svg width="18" height="10" viewBox="0 0 18 10" fill="none" stroke="#fff" strokeWidth="1.4"><path d="M.5 9.5L9 1l8.5 8.5" /></svg>
          </TrayButton>
          <TrayButton type="button" aria-label="Battery" $width={36}>
            <svg width="24" height="18" viewBox="0 0 24 18" fill="none" stroke="#fff" strokeWidth="1.2"><path d="M9 4.5h13.500v12H5.500V11M22.500 8.500h1v4h-1M2 0v4M5.500 0v4M.5 4h7v3.500q0 2-2 2.500H3Q.5 9.500.5 7.500z" /></svg>
          </TrayButton>
          <TrayButton type="button" aria-label="Wireless network" $width={38}>
            <svg width="20" height="20" viewBox="0 0 20 20" fill="none" stroke="#fff" strokeWidth="1.2"><path d="M1 18.500Q1 2 18.500 1M5.500 18.500Q6 7 18.500 6M10 18.500Q10.500 11.500 18.500 10.500" /><circle cx="17" cy="17" r="1.5" fill="#fff" stroke="none" /></svg>
          </TrayButton>
          <TrayButton type="button" aria-label="Input language" $width={53}>ENG</TrayButton>
          <Clock type="button">
            <ClockLine>08:57</ClockLine>
            <ClockLine>11/11/2025</ClockLine>
          </Clock>
          <TrayButton type="button" aria-label="Notifications, 5 new" $width={74}>
            <svg width="38" height="38" viewBox="0 0 38 38">
              <path d="M1 2h24v19H13v5l-5-5H1z" fill="#fff" />
              <path d="M6 7.5h14M6 11.5h14M6 15.5h10" stroke="#262626" strokeWidth="1.2" />
              <circle cx="24.5" cy="25.5" r="12" fill="#3c3c3c" stroke="#9a9a9a" />
              <text x="24.5" y="31" textAnchor="middle" fill="#fff" fontSize="15" fontWeight="600" fontFamily="Open Sans, sans-serif">5</text>
            </svg>
          </TrayButton>
        </Tray>
      </Taskbar>
    </Screen>
  );
}
